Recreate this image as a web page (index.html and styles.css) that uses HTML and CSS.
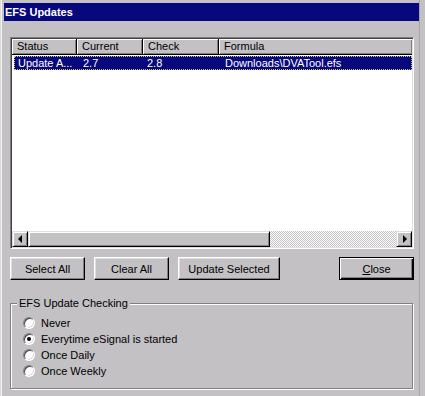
FILE: index.html
```html
<!DOCTYPE html>
<html lang="en">
<head>
  <meta charset="UTF-8" />
  <title>EFS Updates</title>
  <link rel="stylesheet" href="styles.css">
</head>
<body>
  <div class="window">
    <!-- TITLE BAR -->
    <div class="titlebar">EFS Updates</div>

    <div class="client">
      <!-- LIST VIEW -->
      <div class="listview">
        <div class="lv-header">
          <div class="col col-status">Status</div>
          <div class="col col-current">Current</div>
          <div class="col col-check">Check</div>
          <div class="col col-formula">Formula</div>
        </div>
        <div class="lv-rows">
          <div class="lv-row selected">
            <span class="cell col-status">Update A...</span>
            <span class="cell col-current">2.7</span>
            <span class="cell col-check">2.8</span>
            <span class="cell col-formula">Downloads\DVATool.efs</span>
          </div>
        </div>
        <div class="hscroll">
          <div class="sb-btn"><span class="tri tri-left"></span></div>
          <div class="sb-thumb"></div>
          <div class="sb-track"></div>
          <div class="sb-btn"><span class="tri tri-right"></span></div>
        </div>
      </div>

      <!-- BUTTONS -->
      <div class="button-row">
        <button class="btn btn-std">Select All</button>
        <button class="btn btn-std">Clear All</button>
        <button class="btn btn-wide">Update Selected</button>
        <span class="spacer"></span>
        <button class="btn btn-std btn-default"><u>C</u>lose</button>
      </div>

      <!-- UPDATE CHECKING OPTIONS -->
      <fieldset class="groupbox">
        <legend>EFS Update Checking</legend>
        <label class="radio-row"><span class="radio"></span>Never</label>
        <label class="radio-row"><span class="radio checked"></span>Everytime eSignal is started</label>
        <label class="radio-row"><span class="radio"></span>Once Daily</label>
        <label class="radio-row"><span class="radio"></span>Once Weekly</label>
      </fieldset>
    </div>
  </div>
</body>
</html>
```

FILE: styles.css
```css
/* ---------- base ---------- */
html, body { margin: 0; padding: 0; }
body {
  background: #c3c1c3;
  font-family: "Liberation Sans", Arial, sans-serif;
  font-size: 11px;
  color: #000;
}

/* ---------- window frame ---------- */
.window {
  width: 425px;
  height: 396px;
  box-sizing: border-box;
  padding: 3px 6px 0 4px;
  box-shadow: inset 1px 0 #dcdcdc, inset 2px 0 #f4f4f4, inset -5px 0 #c3c1c3, inset -6px 0 #a8a6a8;
  overflow: hidden;
}
.titlebar {
  height: 18px;
  line-height: 18px;
  background: #08087e;
  color: #fff;
  font-weight: bold;
  padding-left: 1px;
}
.client {
  padding: 16px 5px 0 6px;
}

/* ---------- list view ---------- */
.listview {
  height: 212px;
  box-sizing: border-box;
  border: 1px solid;
  border-color: #808080 #fff #fff #808080;
  box-shadow: inset 1px 1px #404040, inset -1px -1px #dfdfdf;
  padding: 1px;
  background: #fff;
  display: flex;
  flex-direction: column;
}
.lv-header {
  display: flex;
  height: 16px;
  flex: none;
}
.lv-header .col {
  box-sizing: border-box;
  height: 16px;
  line-height: 15px;
  padding-left: 5px;
  background: #c3c1c3;
  border-right: 1px solid #000;
  border-bottom: 1px solid #000;
  box-shadow: inset 1px 1px #fff, inset -1px -1px #808080;
}
.col-status  { width: 65px; }
.col-current { width: 66px; }
.col-check   { width: 76px; }
.col-formula { flex: 1; }
.lv-header .col-formula { border-right: none; }

.lv-rows { flex: 1; }
.lv-row {
  display: flex;
  height: 14px;
  line-height: 14px;
  margin: 1px 0 0 2px;
  background: #08087e;
  color: #fff;
  outline: 1px dotted #c8c86a;
  outline-offset: -1px;
}
.lv-row .cell { box-sizing: border-box; padding-left: 4px; white-space: nowrap; }
.lv-row .col-status { width: 63px; }
.lv-row .col-current { padding-left: 6px; }
.lv-row .col-formula { padding-left: 6px; }

/* ---------- horizontal scrollbar ---------- */
.hscroll {
  display: flex;
  height: 16px;
  flex: none;
}
.sb-btn, .sb-thumb {
  box-sizing: border-box;
  background: #c3c1c3;
  border: 1px solid;
  border-color: #dfdfdf #000 #000 #dfdfdf;
  box-shadow: inset 1px 1px #fff, inset -1px -1px #808080;
}
.sb-btn {
  width: 16px;
  display: flex;
  align-items: center;
  justify-content: center;
}
.sb-thumb { width: 242px; }
.sb-track {
  flex: 1;
  background: repeating-conic-gradient(#c3c1c3 0 25%, #fff 0 50%) 0 0 / 2px 2px;
}
.tri { width: 0; height: 0; border-top: 4px solid transparent; border-bottom: 4px solid transparent; }
.tri-left  { border-right: 4px solid #000; margin-left: -1px; }
.tri-right { border-left: 4px solid #000; margin-left: 1px; }

/* ---------- push buttons ---------- */
.button-row {
  display: flex;
  gap: 9px;
  margin-top: 8px;
  height: 23px;
}
.btn {
  box-sizing: border-box;
  height: 23px;
  margin: 0;
  padding: 0;
  font: inherit;
  color: #000;
  background: #c3c1c3;
  border: 1px solid;
  border-color: #fff #000 #000 #fff;
  box-shadow: inset -1px -1px #808080, inset 1px 1px #dfdfdf;
}
.btn-std  { width: 75px; }
.btn-wide { width: 102px; }
.spacer { flex: 1; }
.btn-default {
  border: 1px solid #000;
  box-shadow: inset 1px 1px #fff, inset -1px -1px #000, inset -2px -2px #808080;
}

/* ---------- group box ---------- */
.groupbox {
  margin: 17px 1px 0 0;
  padding: 5px 0 6px 6px;
  border: 1px solid #808080;
  box-shadow: inset 1px 1px #fff, 1px 1px #fff;
  height: 92px;
  box-sizing: border-box;
}
.groupbox legend {
  padding: 0 2px 0 2px;
  margin-left: 0;
  background: #c3c1c3;
  line-height: 13px;
}
.radio-row {
  display: flex;
  align-items: center;
  height: 16px;
  padding-left: 6px;
}
.radio {
  box-sizing: border-box;
  width: 12px;
  height: 12px;
  border-radius: 50%;
  margin-right: 6px;
  background: #fff;
  border: 1px solid;
  border-color: #808080 #fff #fff #808080;
  box-shadow: inset 1px 1px #404040, inset -1px -1px #dfdfdf;
  display: flex;
  align-items: center;
  justify-content: center;
}
.radio.checked::after {
  content: "";
  width: 4px;
  height: 4px;
  border-radius: 50%;
  background: #000;
}
```
